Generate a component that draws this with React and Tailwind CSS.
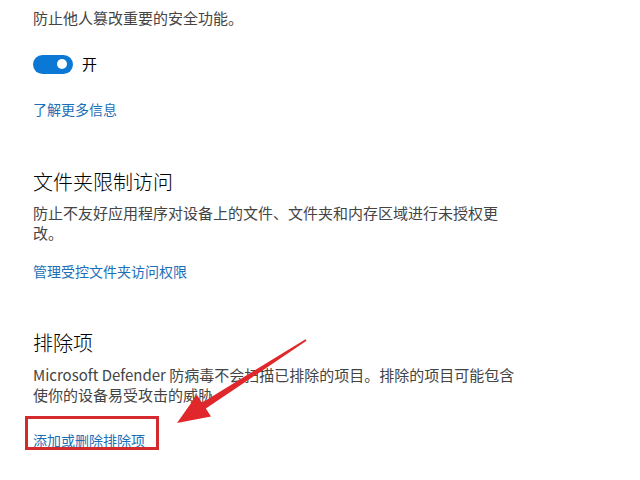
import React from "react";

const font = { fontFamily: '"Noto Sans CJK SC", "Microsoft YaHei", "Noto Sans", sans-serif' };

export default function App() {
  return (
    <div className="relative w-[640px] h-[480px] bg-white overflow-hidden" style={font}>
      <div className="flex flex-col pl-[33px] pt-[8px]">
        <p className="text-[15px] leading-[20px] text-[#444444]">防止他人篡改重要的安全功能。</p>
        <div className="mt-[26px] flex items-center h-[20px] gap-[9px]">
          <div className="w-[40px] h-[19px] rounded-full bg-[#0a78d4] flex items-center justify-end pr-[6px]">
            <div className="w-[10px] h-[10px] rounded-full bg-white" />
          </div>
          <span className="text-[15px] leading-[20px] text-black">开</span>
        </div>
        <a className="mt-[25px] text-[14px] leading-[20px] text-[#1a6fb8]">了解更多信息</a>

        <h2 className="mt-[49px] text-[20px] leading-[28px] font-light text-black">文件夹限制访问</h2>
        <p className="mt-[7px] text-[15px] leading-[20px] text-[#444444]">
          防止不友好应用程序对设备上的文件、文件夹和内存区域进行未授权更
          <br />
          改。
        </p>
        <a className="mt-[18px] text-[14px] leading-[20px] text-[#1a6fb8]">管理受控文件夹访问权限</a>

        <h2 className="mt-[48px] text-[20px] leading-[28px] font-light text-black">排除项</h2>
        <p className="mt-[8px] text-[15px] leading-[20px] text-[#444444]">
          Microsoft Defender 防病毒不会扫描已排除的项目。排除的项目可能包含
          <br />
          使你的设备易受攻击的威胁
        </p>
        <div className="mt-[22px] relative self-start">
          <a className="text-[14px] leading-[20px] text-[#1a6fb8]">添加或删除排除项</a>
          <div className="absolute left-[-8px] top-[-11px] w-[134px] h-[34px] border-[3px] border-[#d42a2e]" />
        </div>
      </div>

      <svg className="absolute left-0 top-0" width="640" height="480" viewBox="0 0 640 480">
        <polygon
          points="305.5,339.2 202,402.8 196.9,394.8 177,423 211,416.6 205.8,408.6 306.5,340.8"
          fill="#e0282c"
        />
      </svg>
    </div>
  );
}
